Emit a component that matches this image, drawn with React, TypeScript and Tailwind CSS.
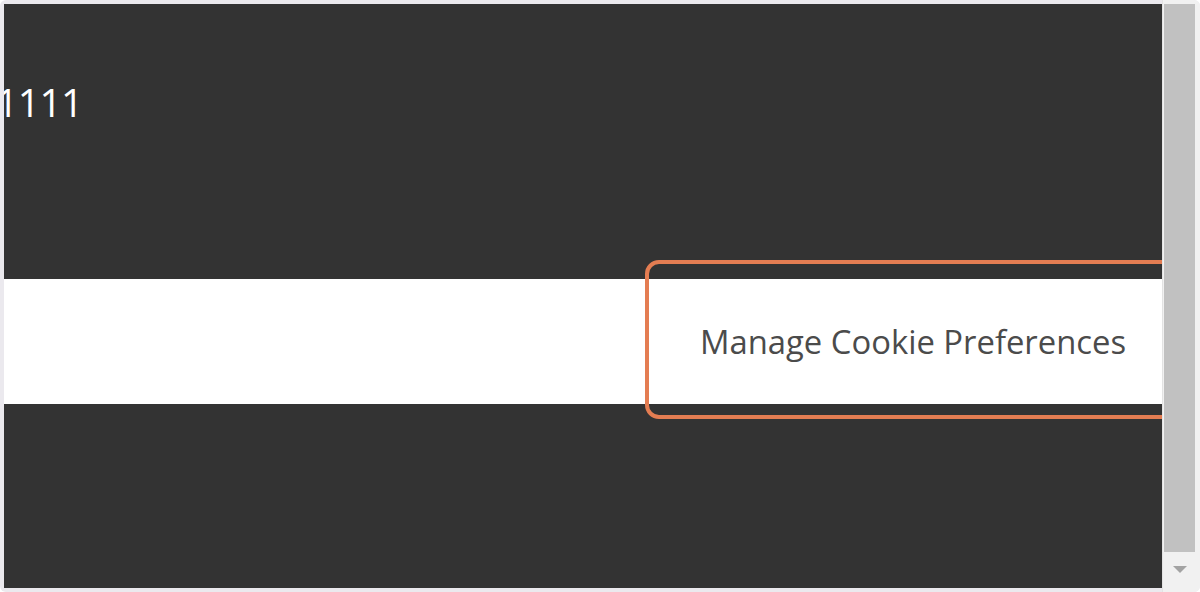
export default function App() {
  return (
    <div className="w-[1200px] h-[592px] bg-[#ebe9ee] p-[4px] rounded-[6px] flex overflow-hidden" style={{ fontFamily: '"Open Sans", "Liberation Sans", sans-serif' }}>
      {/* page area */}
      <div className="relative flex-1 bg-[#333333] overflow-hidden flex flex-col">
        <div className="pt-[78px] ml-[-8px] text-[39px] leading-[39px] tracking-[-0.6px] text-white whitespace-nowrap">1111</div>

        <div className="mt-[158px] h-[125px] bg-white flex items-center">
          <div className="ml-[696px] text-[32.8px] text-[#4b4b4b] whitespace-nowrap">Manage Cookie Preferences</div>
        </div>

        {/* highlight */}
        <div className="absolute left-[641px] top-[256px] w-[560px] h-[159px] rounded-[14px] border-[4px] border-[#e47d52]" />
      </div>

      {/* scrollbar */}
      <div className="w-[38px] bg-[#f1f1f1] border-l border-[#e3e3e3] flex flex-col pl-[1px] -mr-[4px] -my-[4px] py-[4px]">
        <div className="w-[31px] h-[548px] bg-[#c1c1c1]" />
        <div className="flex-1 flex items-center justify-center pr-[4px]">
          <svg width="14" height="8" viewBox="0 0 14 8">
            <polygon points="0,0 14,0 7,7" fill="#a3a3a3" />
          </svg>
        </div>
      </div>
    </div>
  );
}
